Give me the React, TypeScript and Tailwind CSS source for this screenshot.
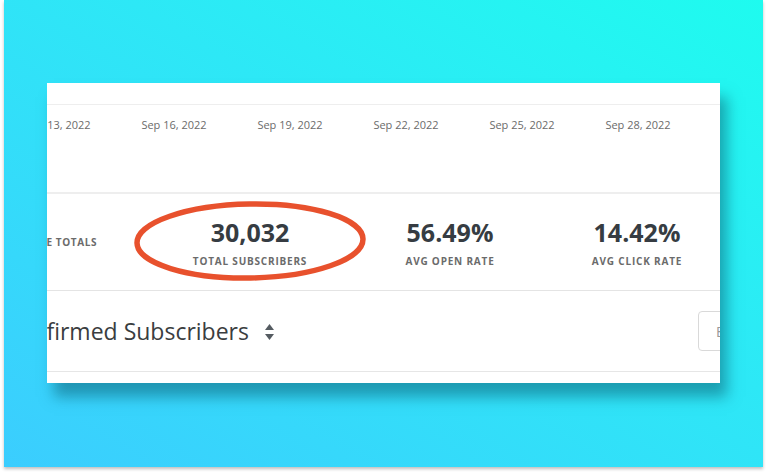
import React from 'react';

const DATES = ['Sep 13, 2022', 'Sep 16, 2022', 'Sep 19, 2022', 'Sep 22, 2022', 'Sep 25, 2022', 'Sep 28, 2022'];

const STATS = [
    { value: '30,032', label: 'Total Subscribers', width: 'w-[180px]', margin: 'ml-[63px]' },
    { value: '56.49%', label: 'Avg Open Rate', width: 'w-[180px]', margin: 'ml-[20px]' },
    { value: '14.42%', label: 'Avg Click Rate', width: 'w-[180px]', margin: 'ml-[7px]' },
];

const SortIcon: React.FC = () => (
    <svg width="9" height="16" viewBox="0 0 9 16" fill="#555b61">
        <path d="M4.5 0 L9 6 H0 Z" />
        <path d="M0 10 H9 L4.5 16 Z" />
    </svg>
);

const App: React.FC = () => {
    return (
        <div className="w-[767px] h-[475px] bg-white overflow-hidden" style={{ fontFamily: '"Open Sans", "Liberation Sans", sans-serif' }}>
            <div className="ml-[4px] w-[759px] h-[467px] bg-linear-to-tr from-[#3bcdfe] to-[#1efbef] shadow-[0_2px_3px_rgba(0,0,0,0.25)] pt-[83px] pl-[43px]">
                <div className="relative w-[673px] h-[300px] bg-white overflow-hidden shadow-[7px_14px_13px_rgba(10,90,110,0.5)]">
                    {/* chart axis */}
                    <div className="h-[22px] border-b border-[#eeeeee]" />
                    <div className="h-[89px] border-b-2 border-[#eeeeee]">
                        <div className="flex ml-[-47px] pt-[13px]">
                            {DATES.map(d => (
                                <div key={d} className="w-[116px] shrink-0 text-center text-[11px] text-[#6b6b6b] leading-[14px]">
                                    {d}
                                </div>
                            ))}
                        </div>
                    </div>

                    {/* totals */}
                    <div className="h-[97px] border-b border-[#e4e4e4] flex items-center">
                        <div className="ml-[-62px] w-[112px] shrink-0 text-right text-[10px] font-bold uppercase tracking-[0.6px] text-[#6b6b6b]">
                            Lifetime Totals
                        </div>
                        {STATS.map(s => (
                            <div key={s.label} className={`${s.width} ${s.margin} shrink-0 flex flex-col items-center`}>
                                <span className="text-[25px] font-bold leading-[30px] text-[#363c42]">{s.value}</span>
                                <span className="mt-[7px] text-[10px] font-bold uppercase tracking-[0.8px] leading-[14px] text-[#6b6b6b]">
                                    {s.label}
                                </span>
                            </div>
                        ))}
                    </div>

                    {/* list header */}
                    <div className="h-[81px] border-b border-[#e6e6e6] flex items-center">
                        <div className="ml-[-43px] flex items-center shrink-0">
                            <span className="text-[23px] text-[#3a3d40] leading-[30px] whitespace-nowrap">Confirmed Subscribers</span>
                            <span className="ml-[16px] mt-[1px]"><SortIcon /></span>
                        </div>
                        <div className="ml-auto mr-[-60px] w-[82px] h-[40px] shrink-0 rounded-[4px] border border-[#d9d9d9] pl-[17px] flex items-center text-[14px] text-[#999]">
                            Export
                        </div>
                    </div>

                    {/* hand drawn circle */}
                    <svg className="absolute left-0 top-0 pointer-events-none" width="673" height="300">
                        <ellipse cx="203" cy="158" rx="113" ry="37" fill="none" stroke="#e8512d" strokeWidth="5.5" transform="rotate(-1 203 158)" />
                    </svg>
                </div>
            </div>
        </div>
    );
};

export default App;
